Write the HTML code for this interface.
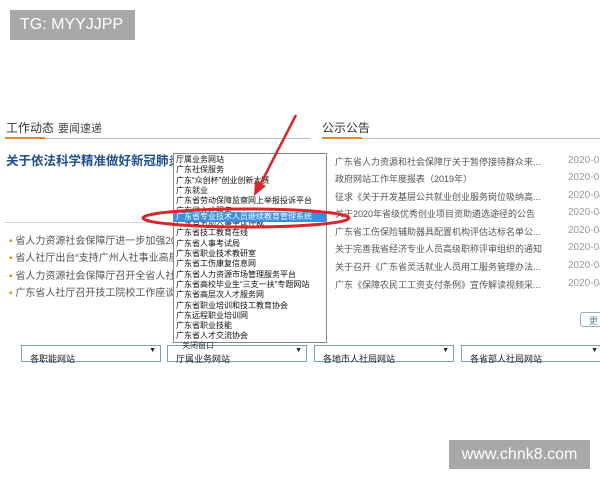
<!DOCTYPE html>
<html><head><meta charset="utf-8"><style>
*{margin:0;padding:0;box-sizing:border-box}
body{width:600px;height:480px;background:#fff;position:relative;overflow:hidden;font-family:"Liberation Sans","Noto Sans CJK SC",sans-serif}
.a{position:absolute;white-space:nowrap}
.tg{left:10px;top:10px;width:125px;height:30px;background:#a8a8a8;color:#fff;font-size:16px;line-height:30px;padding-left:10px}
.wm{left:449px;top:440px;width:141px;height:29px;background:#a8a8a8;color:#fff;font-size:16px;line-height:29px;text-align:center}
.li{font-size:10px;color:#555}
.dd{left:173px;top:153px;width:154px;height:190px;border:1px solid #888;background:#fff;overflow:hidden;padding-top:1px}
.dd div{font-size:8px;line-height:10.3px;height:10.3px;padding-left:2px;color:#111;overflow:hidden}
.sel{height:17px;top:345px;border:1px solid #7f9fb8;font-size:9px;color:#222;padding:6px 0 0 8px;background:#fff}
.sel:after{content:"▼";position:absolute;right:4px;top:1px;font-size:7px}
.rt{font-size:9px;color:#555}
.dt{font-size:10px;color:#999}
</style></head><body>
<div class="a tg">TG: MYYJJPP</div>
<div class="a" style="left:6px;top:119px;font-size:12px;color:#333">工作动态</div>
<div class="a" style="left:58px;top:120px;font-size:11px;color:#444">要闻速递</div>
<div class="a" style="left:5px;top:138px;width:305px;height:1px;background:#bbb"></div>
<div class="a" style="left:5px;top:137px;width:40px;height:2px;background:#e08a2c"></div>
<div class="a" style="left:322px;top:119px;font-size:12px;color:#333">公示公告</div>
<div class="a" style="left:322px;top:138px;width:278px;height:1px;background:#bbb"></div>
<div class="a" style="left:322px;top:137px;width:40px;height:2px;background:#e08a2c"></div>
<div class="a" style="left:6px;top:150px;font-size:12.5px;font-weight:bold;color:#1f4e8c">关于依法科学精准做好新冠肺炎疫情防控工作</div>
<div class="a" style="left:5px;top:222px;width:170px;height:1px;background:#c8d4e0"></div>
<div class="a li" style="left:9px;top:232px"><span style="color:#e08a2c">▪</span> 省人力资源社会保障厅进一步加强2020年</div>
<div class="a li" style="left:9px;top:249px"><span style="color:#e08a2c">▪</span> 省人社厅出台“支持广州人社事业高质量</div>
<div class="a li" style="left:9px;top:267px"><span style="color:#e08a2c">▪</span> 省人力资源社会保障厅召开全省人社系统</div>
<div class="a li" style="left:9px;top:284px"><span style="color:#e08a2c">▪</span> 广东省人社厅召开技工院校工作座谈会 深</div>
<div class="a rt" style="left:335px;top:155px">广东省人力资源和社会保障厅关于暂停接待群众来...</div>
<div class="a rt" style="left:335px;top:172px">政府网站工作年度报表（2019年）</div>
<div class="a rt" style="left:335px;top:190px">征求《关于开发基层公共就业创业服务岗位吸纳高...</div>
<div class="a rt" style="left:335px;top:207px">关于2020年省级优秀创业项目资助遴选途径的公告</div>
<div class="a rt" style="left:335px;top:225px">广东省工伤保险辅助器具配置机构评估达标名单公...</div>
<div class="a rt" style="left:335px;top:242px">关于完善我省经济专业人员高级职称评审组织的通知</div>
<div class="a rt" style="left:335px;top:260px">关于召开《广东省灵活就业人员用工服务管理办法...</div>
<div class="a rt" style="left:335px;top:278px">广东《保障农民工工资支付条例》宣传解读视频采...</div>
<div class="a dt" style="left:568px;top:155px">2020-01</div>
<div class="a dt" style="left:568px;top:172px">2020-01</div>
<div class="a dt" style="left:568px;top:190px">2020-04</div>
<div class="a dt" style="left:568px;top:207px">2020-04</div>
<div class="a dt" style="left:568px;top:225px">2020-04</div>
<div class="a dt" style="left:568px;top:242px">2020-04</div>
<div class="a dt" style="left:568px;top:260px">2020-04</div>
<div class="a dt" style="left:568px;top:278px">2020-04</div>
<div class="a" style="left:580px;top:312px;width:24px;height:15px;border:1px solid #9ab;border-radius:3px;font-size:9px;color:#58a;padding:1px 0 0 8px">更</div>
<div class="a sel" style="left:21px;width:140px">各职能网站</div>
<div class="a sel" style="left:167px;width:140px">厅属业务网站</div>
<div class="a sel" style="left:314px;width:140px">各地市人社局网站</div>
<div class="a sel" style="left:461px;width:142px">各省部人社局网站</div>
<div class="a dd">
<div>厅属业务网站</div><div>广东社保服务</div><div>广东“众创杯”创业创新大赛</div><div>广东就业</div><div>广东省劳动保障监察网上举报投诉平台</div><div style="height:6px">广东省人才服务</div><div style="background:#3b8ee0;color:#fff;height:10px;line-height:10px">广东省专业技术人员继续教育管理系统</div><div style="height:6px;line-height:2px">广东省劳动人事争议仲裁</div><div>广东省技工教育在线</div><div>广东省人事考试局</div><div>广东省职业技术教研室</div><div>广东省工伤康复信息网</div><div>广东省人力资源市场管理服务平台</div><div>广东省高校毕业生“三支一扶”专题网站</div><div>广东省高层次人才服务网</div><div>广东省职业培训和技工教育协会</div><div>广东远程职业培训网</div><div>广东省职业技能</div><div>广东省人才交流协会</div>
</div>
<div class="a" style="left:182px;top:342px;font-size:8px;color:#333;line-height:8px">关闭窗口</div>
<svg class="a" style="left:0;top:0" width="600" height="480">
<ellipse cx="246" cy="218" rx="103" ry="9" fill="none" stroke="#d8262a" stroke-width="3"/>
<line x1="296" y1="115" x2="260" y2="185" stroke="#d8262a" stroke-width="2.5"/>
<polygon points="254,196 255,180 266,186" fill="#d8262a"/>
</svg>
<div class="a wm">www.chnk8.com</div>
</body></html>
